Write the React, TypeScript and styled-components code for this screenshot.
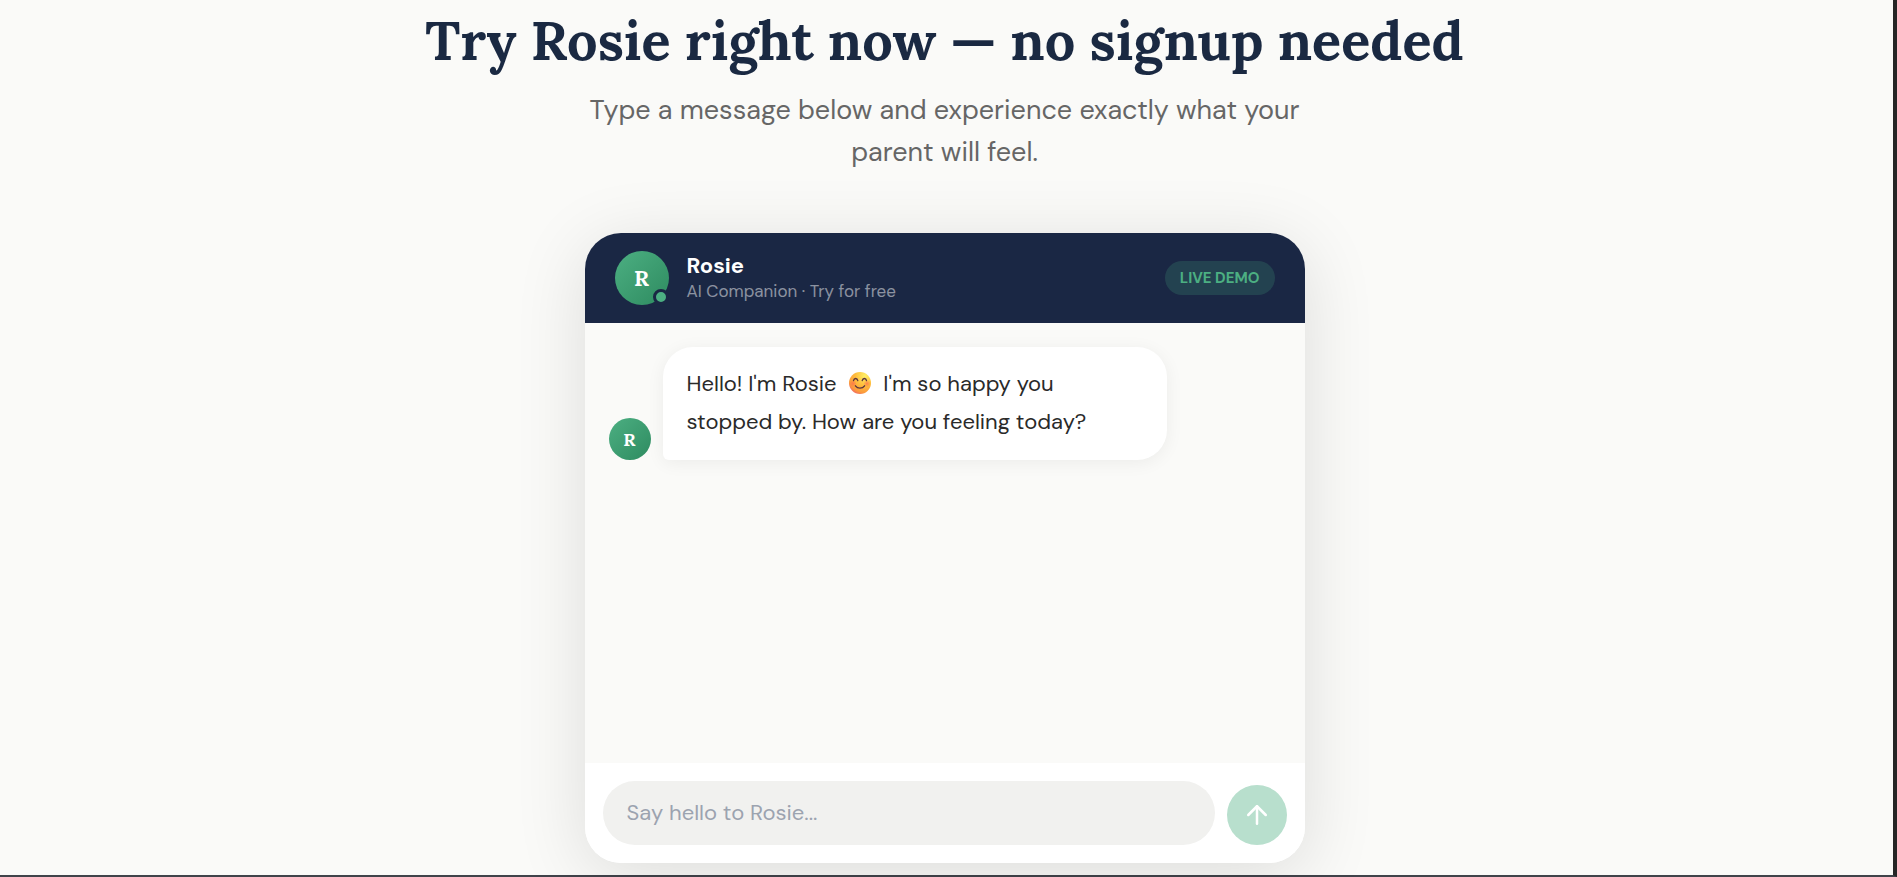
import React, { useState } from 'react';
import styled, { createGlobalStyle, css } from 'styled-components';
import { ArrowUp } from 'lucide-react';

const color = {
  ink: '#1a2942',
  navy: '#1a2744',
  green: '#4caf82',
  greenDark: '#2e8b60',
  paper: '#fafaf8',
  field: '#f1f1ef',
};

const sans = "'DM Sans', 'Open Sans', sans-serif";
const serif = "Lora, 'Liberation Serif', serif";

const GlobalStyle = createGlobalStyle`
  *, *::before, *::after { box-sizing: border-box; }
  body {
    margin: 0;
    background: ${color.paper};
    font-family: ${sans};
    color: #2a2a2a;
  }
`;

const Page = styled.div`
  min-height: 100vh;
  display: flex;
  background: ${color.paper};
  border-right: 4px solid #262626;
  border-bottom: 2px solid #40434a;
`;

const DemoSection = styled.section`
  flex: 1;
  display: flex;
  flex-direction: column;
  align-items: center;
  padding: 8px 4px 12px 0;
`;

const Title = styled.h2`
  margin: 0 0 16px;
  font: 700 54px/65px ${serif};
  color: ${color.ink};
  text-align: center;
`;

const Subtitle = styled.p`
  max-width: 720px;
  margin: 0 0 60px;
  font-size: 27px;
  line-height: 42px;
  color: #666;
  text-align: center;
`;

const ChatCard = styled.article`
  width: 100%;
  max-width: 720px;
  border-radius: 36px;
  overflow: hidden;
  background: #fff;
  box-shadow: 0 12px 72px rgba(0, 0, 0, 0.12);
`;

const ChatHeader = styled.header`
  display: flex;
  align-items: center;
  gap: 18px;
  padding: 18px 30px;
  background: ${color.navy};
`;

const Avatar = styled.div<{ $small?: boolean }>`
  position: relative;
  flex: none;
  display: flex;
  align-items: center;
  justify-content: center;
  border-radius: 50%;
  background: linear-gradient(135deg, ${color.green}, ${color.greenDark});
  color: #fff;
  font-family: ${serif};
  font-weight: 700;
  ${({ $small }) =>
    $small
      ? css`
          width: 42px;
          height: 42px;
          font-size: 18px;
        `
      : css`
          width: 54px;
          height: 54px;
          font-size: 22px;
        `}
`;

const OnlineDot = styled.span`
  position: absolute;
  right: 0;
  bottom: 0;
  width: 16px;
  height: 16px;
  border: 3px solid ${color.navy};
  border-radius: 50%;
  background: ${color.green};
`;

const Identity = styled.div`
  flex: 1;
`;

const Name = styled.h3`
  margin: 0;
  font-size: 22px;
  font-weight: 700;
  line-height: 26px;
  color: #fff;
`;

const Tagline = styled.p`
  margin: 0;
  font-size: 17px;
  line-height: 24px;
  color: rgba(255, 255, 255, 0.5);
`;

const Badge = styled.span`
  padding: 6px 15px;
  border-radius: 30px;
  background: rgba(76, 175, 130, 0.2);
  color: ${color.green};
  font-size: 15px;
  font-weight: 700;
  line-height: 22px;
`;

const Messages = styled.div`
  min-height: 440px;
  padding: 24px;
  background: ${color.paper};
`;

const MessageRow = styled.div`
  display: flex;
  align-items: flex-end;
  gap: 12px;
`;

const Bubble = styled.p`
  max-width: 75%;
  margin: 0;
  padding: 18px 30px 19px 24px;
  border-radius: 30px 30px 30px 6px;
  background: #fff;
  box-shadow: 0 3px 18px rgba(0, 0, 0, 0.06);
  font-size: 22px;
  line-height: 38px;
`;

const Emoji = styled.svg`
  width: 22px;
  height: 22px;
  margin: 0 6px 0 7px;
  vertical-align: -3px;
`;

const Composer = styled.form`
  display: flex;
  align-items: flex-end;
  gap: 12px;
  padding: 18px;
  background: #fff;
`;

const MessageField = styled.input`
  flex: 1;
  min-width: 0;
  height: 64px;
  padding: 0 24px 2px;
  border: 0;
  border-radius: 32px;
  outline: 0;
  background: ${color.field};
  color: #2a2a2a;
  font: 400 22px/36px ${sans};

  &::placeholder {
    color: #9ca3af;
    opacity: 1;
  }
`;

const SendButton = styled.button`
  flex: none;
  display: grid;
  place-items: center;
  width: 60px;
  height: 60px;
  padding: 0;
  border: 0;
  border-radius: 50%;
  background: ${color.green};
  color: #fff;
  cursor: pointer;

  &:disabled {
    background: #b8dfcd;
    cursor: default;
  }
`;

function SmilingFace() {
  return (
    <Emoji viewBox="0 0 22 22" role="img" aria-label="smiling face">
      <defs>
        <radialGradient id="face" cx="0.72" cy="0.18" r="0.95">
          <stop offset="0" stopColor="#fff066" />
          <stop offset="0.45" stopColor="#ffbe3d" />
          <stop offset="0.8" stopColor="#fb9a3c" />
          <stop offset="1" stopColor="#ee5a6e" />
        </radialGradient>
        <radialGradient id="cheek">
          <stop offset="0" stopColor="#ff6650" stopOpacity="0.7" />
          <stop offset="1" stopColor="#ff6650" stopOpacity="0" />
        </radialGradient>
      </defs>
      <circle cx="11" cy="11" r="11" fill="url(#face)" />
      <circle cx="4" cy="11.5" r="3.6" fill="url(#cheek)" />
      <circle cx="18" cy="11.5" r="3.6" fill="url(#cheek)" />
      <g fill="none" stroke="#5a3440" strokeWidth="1.3" strokeLinecap="round">
        <path d="M4.5 8.6C5 5.8 8.2 5.8 8.8 8.6" />
        <path d="M13.2 8.6C13.8 5.8 17 5.8 17.5 8.6" />
        <path d="M6.4 13.8C8.6 16.9 13.4 16.9 15.6 13.8" />
      </g>
    </Emoji>
  );
}

export default function App() {
  const [draft, setDraft] = useState('');

  return (
    <>
      <GlobalStyle />
      <Page>
        <DemoSection>
          <Title>Try Rosie right now — no signup needed</Title>
          <Subtitle>
            Type a message below and experience exactly what your parent will feel.
          </Subtitle>
          <ChatCard>
            <ChatHeader>
              <Avatar>
                R
                <OnlineDot />
              </Avatar>
              <Identity>
                <Name>Rosie</Name>
                <Tagline>AI Companion · Try for free</Tagline>
              </Identity>
              <Badge>LIVE DEMO</Badge>
            </ChatHeader>
            <Messages>
              <MessageRow>
                <Avatar $small>R</Avatar>
                <Bubble>
                  Hello! I'm Rosie <SmilingFace /> I'm so happy you stopped by. How are you
                  feeling today?
                </Bubble>
              </MessageRow>
            </Messages>
            <Composer onSubmit={(event) => event.preventDefault()}>
              <MessageField
                type="text"
                aria-label="Message to Rosie"
                placeholder="Say hello to Rosie..."
                value={draft}
                onChange={(event) => setDraft(event.target.value)}
              />
              <SendButton type="submit" aria-label="Send message" disabled={!draft.trim()}>
                <ArrowUp size={30} />
              </SendButton>
            </Composer>
          </ChatCard>
        </DemoSection>
      </Page>
    </>
  );
}
